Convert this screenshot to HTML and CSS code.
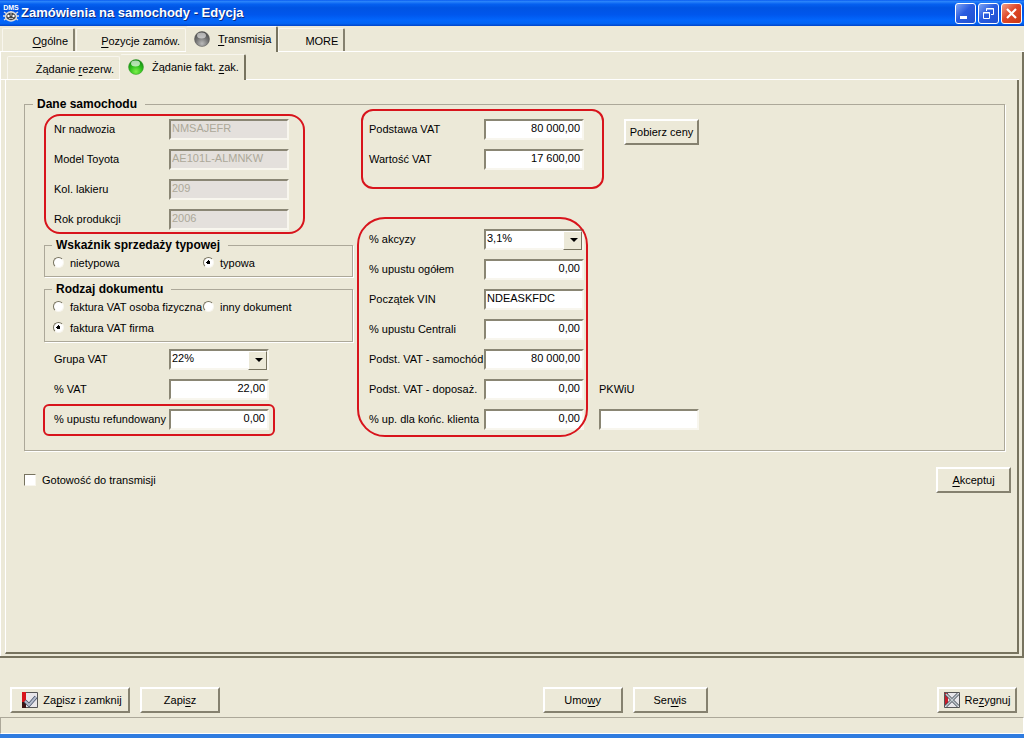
FILE: index.html
```html
<!DOCTYPE html>
<html lang="pl">
<head>
    <meta charset="UTF-8">
    <meta name="viewport" content="width=device-width, initial-scale=1.0">
    <title>Zamówienia na samochody - Edycja</title>
    <link rel="stylesheet" href="styles.css">
</head>
<body>
    <header class="title-bar">
        <svg class="app-icon" width="16" height="18" viewBox="0 0 16 18">
            <text x="8" y="6" text-anchor="middle" class="app-icon-text">DMS</text>
            <path d="M1 8l3 2M15 8l-3 2M0 12h3M16 12h-3M1 16l3-2M15 16l-3-2M8 7v2" stroke="#ddd" stroke-width="1.5"/>
            <ellipse cx="8" cy="12.5" rx="5.5" ry="4.5" fill="#444" stroke="#ddd" stroke-width="1.5"/>
            <circle cx="5.5" cy="12" r="1.2" fill="#fff"/>
            <circle cx="10.5" cy="12" r="1.2" fill="#fff"/>
            <path d="M6 14.500h4M8 9v3" stroke="#bbb"/>
        </svg>
        <h1>Zamówienia na samochody - Edycja</h1>
        <div class="window-buttons">
            <button class="win-btn" aria-label="Minimalizuj">
                <svg width="19" height="19" viewBox="0 0 19 19"><path d="M4 12h7v3H4z" fill="#fff"/></svg>
            </button>
            <button class="win-btn" aria-label="Przywróć">
                <svg width="19" height="19" viewBox="0 0 19 19" fill="none" stroke="#fff"><path d="M7.5 7V4.5h7v6H12M7 5h8M4.5 8.5h6v6h-6zM4 9h7"/></svg>
            </button>
            <button class="win-btn win-close" aria-label="Zamknij">
                <svg width="19" height="19" viewBox="0 0 19 19"><path d="M5 5l9 9M14 5l-9 9" stroke="#fff" stroke-width="2.2"/></svg>
            </button>
        </div>
    </header>

    <main class="panel outer-panel">
        <nav class="tabs outer-tabs">
            <button class="tab tab-general"><span><u>O</u>gólne</span></button>
            <button class="tab tab-items"><span><u>P</u>ozycje zamów.</span></button>
            <button class="tab active">
                <svg width="16" height="16" viewBox="0 0 16 16">
                    <defs>
                        <radialGradient id="gray-ball" cx="0.5" cy="0.8" r="0.8">
                            <stop offset="0" stop-color="#bbb"/>
                            <stop offset="0.5" stop-color="#777"/>
                            <stop offset="1" stop-color="#444"/>
                        </radialGradient>
                    </defs>
                    <circle cx="8" cy="8" r="7.5" fill="url(#gray-ball)" stroke="#555" stroke-width="0.5"/>
                    <ellipse cx="7.5" cy="4.5" rx="4.5" ry="3" fill="#fff" opacity="0.55"/>
                </svg>
                <span><u>T</u>ransmisja</span>
            </button>
            <button class="tab tab-more"><span>MORE</span></button>
        </nav>

        <section class="panel inner-panel">
            <nav class="tabs inner-tabs">
                <button class="tab tab-reserve"><span>Żądanie <u>r</u>ezerw.</span></button>
                <button class="tab active">
                    <svg width="16" height="16" viewBox="0 0 16 16">
                        <defs>
                            <radialGradient id="green-ball" cx="0.5" cy="0.8" r="0.8">
                                <stop offset="0" stop-color="#7cf04a"/>
                                <stop offset="0.5" stop-color="#2fc01c"/>
                                <stop offset="1" stop-color="#0f7d12"/>
                            </radialGradient>
                        </defs>
                        <circle cx="8" cy="8" r="7.5" fill="url(#green-ball)" stroke="#3a9a2c" stroke-width="0.5"/>
                        <ellipse cx="7.5" cy="4.5" rx="4.5" ry="3" fill="#fff" opacity="0.65"/>
                    </svg>
                    <span>Żądanie fakt. <u>z</u>ak.</span>
                </button>
            </nav>

            <form class="form">
                <fieldset class="group car-data">
                    <legend>Dane samochodu</legend>

                    <div class="column-left">
                        <div class="rows mark mark-car">
                            <div class="row">
                                <label for="body-no">Nr nadwozia</label>
                                <input class="field wide" type="text" id="body-no" value="NMSAJEFR" disabled>
                            </div>
                            <div class="row">
                                <label for="model">Model Toyota</label>
                                <input class="field wide" type="text" id="model" value="AE101L-ALMNKW" disabled>
                            </div>
                            <div class="row">
                                <label for="paint">Kol. lakieru</label>
                                <input class="field wide" type="text" id="paint" value="209" disabled>
                            </div>
                            <div class="row">
                                <label for="year">Rok produkcji</label>
                                <input class="field wide" type="text" id="year" value="2006" disabled>
                            </div>
                        </div>

                        <fieldset class="group options">
                            <legend>Wskaźnik sprzedaży typowej</legend>
                            <label class="option"><input type="radio" name="sale">nietypowa</label>
                            <label class="option"><input type="radio" name="sale" checked>typowa</label>
                        </fieldset>

                        <fieldset class="group options">
                            <legend>Rodzaj dokumentu</legend>
                            <label class="option"><input type="radio" name="doc">faktura VAT osoba fizyczna</label>
                            <label class="option"><input type="radio" name="doc">inny dokument</label>
                            <label class="option"><input type="radio" name="doc" checked>faktura VAT firma</label>
                        </fieldset>

                        <div class="rows rows-vat">
                            <div class="row">
                                <label for="vat-group">Grupa VAT</label>
                                <span class="select-box"><select class="field" id="vat-group"><option>22%</option></select></span>
                            </div>
                            <div class="row">
                                <label for="vat">% VAT</label>
                                <input class="field number" type="text" id="vat" value="22,00">
                            </div>
                        </div>
                        <div class="rows mark mark-refund">
                            <div class="row">
                                <label for="refund">% upustu refundowany</label>
                                <input class="field number" type="text" id="refund" value="0,00">
                            </div>
                        </div>
                    </div>

                    <div class="column-middle">
                        <div class="mark mark-vat">
                            <div class="row">
                                <label for="vat-base">Podstawa VAT</label>
                                <input class="field number" type="text" id="vat-base" value="80 000,00">
                            </div>
                            <div class="row">
                                <label for="vat-value">Wartość VAT</label>
                                <input class="field number" type="text" id="vat-value" value="17 600,00">
                            </div>
                        </div>
                        <div class="mark mark-discount">
                            <div class="row">
                                <label for="excise">% akcyzy</label>
                                <span class="select-box"><select class="field" id="excise"><option>3,1%</option></select></span>
                            </div>
                            <div class="row">
                                <label for="discount">% upustu ogółem</label>
                                <input class="field number" type="text" id="discount" value="0,00">
                            </div>
                            <div class="row">
                                <label for="vin">Początek VIN</label>
                                <input class="field" type="text" id="vin" value="NDEASKFDC">
                            </div>
                            <div class="row">
                                <label for="central">% upustu Centrali</label>
                                <input class="field number" type="text" id="central" value="0,00">
                            </div>
                            <div class="row">
                                <label for="base-car">Podst. VAT - samochód</label>
                                <input class="field number" type="text" id="base-car" value="80 000,00">
                            </div>
                            <div class="row">
                                <label for="base-extra">Podst. VAT - doposaż.</label>
                                <input class="field number" type="text" id="base-extra" value="0,00">
                            </div>
                            <div class="row">
                                <label for="client">% up. dla końc. klienta</label>
                                <input class="field number" type="text" id="client" value="0,00">
                            </div>
                        </div>
                    </div>

                    <div class="column-right">
                        <button type="button" class="btn btn-prices">Pobierz ceny</button>
                        <div class="pkwiu">
                            <label for="pkwiu">PKWiU</label>
                            <input class="field" type="text" id="pkwiu">
                        </div>
                    </div>
                </fieldset>

                <div class="form-footer">
                    <label class="check"><input type="checkbox">Gotowość do transmisji</label>
                    <button type="button" class="btn"><span><u>A</u>kceptuj</span></button>
                </div>
            </form>
        </section>
    </main>

    <footer class="actions">
        <div class="action-group">
            <button class="btn btn-save-close">
                <svg width="16" height="16" viewBox="0 0 16 16">
                    <path d="M0 0h16v16H0z" fill="#e8e6ea"/>
                    <path d="M0 0h4v10H0z" fill="#d8141c"/>
                    <path d="M0 10h4v6H0z" fill="#3a1414"/>
                    <path d="M4 .5h11.5v15H4" fill="none" stroke="#555"/>
                    <path d="M3 9l4 4 7-8" fill="none" stroke="#44506a" stroke-width="3.5"/>
                    <path d="M3 9l4 4 7-8" fill="none" stroke="#b4bccb" stroke-width="2"/>
                </svg>
                <span>Za<u>p</u>isz i zamknij</span>
            </button>
            <button class="btn btn-medium"><span>Zapi<u>s</u>z</span></button>
        </div>
        <div class="action-group">
            <button class="btn btn-medium"><span>Umo<u>w</u>y</span></button>
            <button class="btn"><span>Ser<u>w</u>is</span></button>
        </div>
        <button class="btn btn-medium btn-cancel">
            <svg width="16" height="16" viewBox="0 0 16 16">
                <path d="M0 0h16v16H0z" fill="#e8e6ea"/>
                <path d="M0 0h4v13H0z" fill="#c81a28"/>
                <path d="M.5 .5h15v15H.5z" fill="none" stroke="#555"/>
                <path d="M2 2l12 12M14 2L2 14" stroke="#444c58" stroke-width="3"/>
                <path d="M2 2l12 12M14 2L2 14" stroke="#c4ccd0" stroke-width="1.5"/>
            </svg>
            <span>Re<u>z</u>ygnuj</span>
        </button>
    </footer>

    <div class="status-bar"></div>
</body>
</html>
```

FILE: styles.css
```css
* {
    margin: 0;
    padding: 0;
    box-sizing: border-box;
}

body {
    display: flex;
    flex-direction: column;
    min-height: 100vh;
    background-color: #ece9d8;
    border-bottom: 4px solid #2f7ce0;
    color: #000;
    font-family: "Liberation Sans", Arial, sans-serif;
    font-size: 11px;
    line-height: 14px;
}

button, input, select {
    font: inherit;
    color: inherit;
}

u {
    text-underline-offset: 2px;
}

/* Title bar */
.title-bar {
    display: flex;
    align-items: center;
    height: 26px;
    padding: 0 2px 0 3px;
    background: linear-gradient(#0a5cf0 0%, #2a84fa 6%, #0560f0 16%, #0054e3 30%, #0056ec 55%, #0266fc 78%, #0264f4 90%, #0144c8 100%);
    color: #fff;
}

.title-bar h1 {
    flex: 1;
    margin-left: 2px;
    font-size: 13px;
    text-shadow: 1px 1px #0a2c84;
}

.app-icon-text {
    font-size: 7px;
    font-weight: bold;
    fill: #fff;
}

.window-buttons {
    display: flex;
    gap: 2px;
}

.win-btn {
    width: 21px;
    height: 21px;
    border: 1px solid #fff;
    border-radius: 3px;
    background: linear-gradient(135deg, #7ea4f4, #2a5ce0 45%, #2050d0);
}

.win-btn svg {
    display: block;
}

.win-close {
    background: linear-gradient(135deg, #f0a088, #e0482a 45%, #c83814);
}

/* Tabs and panels */
.tabs {
    display: flex;
    align-items: flex-end;
}

.tab {
    display: flex;
    align-items: center;
    justify-content: flex-end;
    height: 23px;
    padding: 1px 5px 0;
    border: 1px solid #f8f6ee;
    border-right: 2px solid #85816f;
    border-bottom: none;
    border-radius: 2px 2px 0 0;
    background-color: #ece9d8;
    white-space: nowrap;
}

.tab.active {
    gap: 8px;
    height: 26px;
    margin-bottom: -1px;
    padding: 0 5px 2px 7px;
    border-color: #f8f6ee #77735f transparent #ece9d8;
}

.outer-tabs {
    height: 26px;
    padding-left: 2px;
    border-bottom: 1px solid #fff;
}

.inner-tabs {
    height: 27px;
    padding-left: 6px;
    border-bottom: 1px solid #fff;
}

.tab-general {
    width: 73px;
    margin-right: 1px;
}

.tab-items {
    width: 110px;
    border-right: 1px solid #f8f6ee;
}

.tab-more {
    width: 67px;
}

.tab-reserve {
    width: 113px;
    border-right: 1px solid #f8f6ee;
}

.outer-panel {
    display: flex;
    flex: 1;
    flex-direction: column;
    border-bottom: 2px solid #77735f;
}

.inner-panel {
    display: flex;
    flex: 1;
    flex-direction: column;
    padding: 1px 3px 2px 0;
    border-right: 2px solid #77735f;
    border-left: 1px solid #fff;
}

.form {
    flex: 1;
    margin-left: 4px;
    padding: 17px 6px 0 18px;
    border: solid #77735f;
    border-width: 0 2px 2px 0;
    border-left: 1px solid #fff;
}

/* Groups */
.group {
    min-width: 0;
    border: 1px solid #aca899;
    box-shadow: 1px 1px #fff;
}

.group legend {
    padding: 0 8px 0 4px;
    font-size: 12px;
    font-weight: bold;
}

.car-data {
    display: grid;
    grid-template-columns: 309px 215px 1fr;
    column-gap: 16px;
    margin-right: 6px;
    padding: 3px 0 16px 19px;
}

.car-data > legend {
    margin-left: -11px;
}

.column-right {
    display: flex;
    flex-direction: column;
    align-items: flex-start;
    justify-content: space-between;
    margin-left: -1px;
    padding-top: 5px;
}

.row {
    display: flex;
    align-items: center;
    height: 30px;
}

.row label {
    width: 115px;
    white-space: nowrap;
}

.rows {
    width: fit-content;
    padding-left: 10px;
}

.rows-vat {
    margin-top: 2px;
}

.options {
    display: grid;
    grid-template-columns: 150px 1fr;
    margin-top: 4px;
    padding: 0 0 3px 8px;
}

.options + .options {
    margin-top: 5px;
}

.options legend {
    margin-left: -1px;
}

.option {
    display: flex;
    align-items: center;
    gap: 6px;
    height: 21px;
    white-space: nowrap;
}

/* Controls */
.field {
    width: 100px;
    height: 21px;
    padding: 0 2px 2px 1px;
    border: 2px solid;
    border-color: #8a8674 #f8f6ee #f8f6ee #8a8674;
    border-radius: 0;
    background-color: #fff;
}

.wide {
    width: 120px;
}

.number {
    text-align: right;
}

.field:disabled {
    background-color: #e4e0dc;
    color: #aca899;
}

.select-box {
    position: relative;
}

.select-box select {
    display: block;
    appearance: none;
}

.select-box::before {
    content: "";
    position: absolute;
    top: 2px;
    right: 2px;
    width: 17px;
    height: 17px;
    border: 1px solid;
    border-color: #fff #77735f #77735f #fff;
    background-color: #ece9d8;
    pointer-events: none;
}

.select-box::after {
    content: "";
    position: absolute;
    top: 9px;
    right: 6px;
    border: 4px solid transparent;
    border-top-color: #000;
    border-bottom: none;
    pointer-events: none;
}

input[type="radio"], input[type="checkbox"] {
    appearance: none;
    flex: none;
    width: 12px;
    height: 12px;
    border: 1px solid;
    border-color: #77735f #f8f6ee #f8f6ee #77735f;
    background-color: #fff;
}

input[type="radio"] {
    width: 11px;
    height: 11px;
    border-radius: 50%;
}

input[type="radio"]:checked {
    background-image: radial-gradient(circle, #000 2px, transparent 2px);
}

.btn {
    display: flex;
    align-items: center;
    justify-content: center;
    width: 75px;
    height: 26px;
    border: 2px solid;
    border-color: #fff #85816f #85816f #fff;
    background-color: #ece9d8;
    white-space: nowrap;
}

.btn-medium {
    width: 80px;
}

.btn-save-close {
    gap: 5px;
    width: 120px;
    padding-left: 4px;
}

.btn-cancel {
    gap: 5px;
}

.btn-prices {
    margin-left: 25px;
}

.pkwiu {
    display: grid;
    align-items: center;
    grid-auto-rows: 30px;
}

.form-footer {
    display: flex;
    align-items: center;
    justify-content: space-between;
    margin-top: 16px;
}

.check {
    display: flex;
    align-items: center;
    gap: 6px;
}

/* Red frames round the highlighted fields */
.mark {
    position: relative;
}

.mark::after {
    content: "";
    position: absolute;
    inset: 0;
    border: 2px solid #d8141c;
    border-radius: 16px;
    pointer-events: none;
}

.mark-car {
    padding-right: 16px;
}

.mark-refund::after {
    inset: 0 -6px -2px -1px;
    border-radius: 6px;
}

.mark-vat {
    margin-bottom: 50px;
}

.mark-vat::after {
    inset: -5px -20px -15px -8px;
    border-radius: 12px;
}

.mark-discount::after {
    inset: -7px -4px -3px -12px;
    border-radius: 28px;
}

/* Bottom bar */
.actions {
    display: grid;
    grid-template-columns: 27fr 20fr auto;
    padding: 29px 7px 4px 10px;
}

.action-group {
    display: flex;
    gap: 10px;
}

.status-bar {
    height: 17px;
    border: 1px solid #aca899;
    border-right-color: #fff;
    border-bottom-color: #fff;
}
```
